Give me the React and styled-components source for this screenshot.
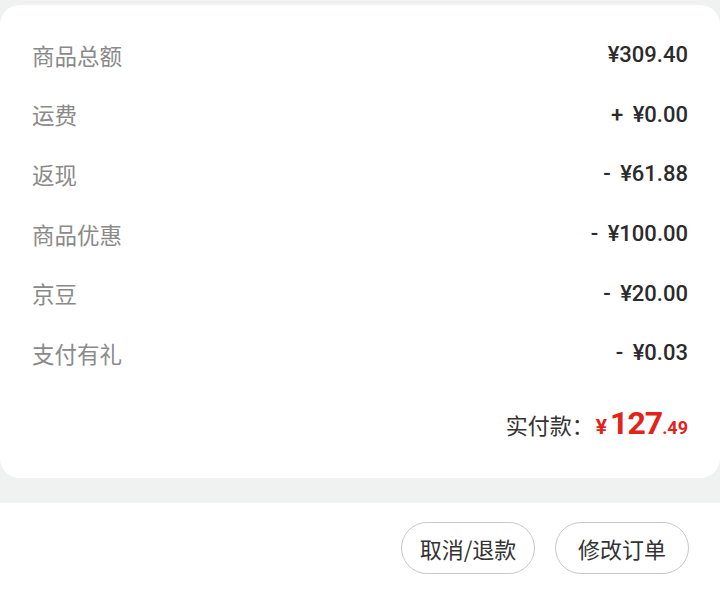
import React from 'react';
import styled, { createGlobalStyle } from 'styled-components';

const GlobalStyle = createGlobalStyle`
  html, body {
    margin: 0;
    padding: 0;
    background-color: #F0F2F1;
    font-family: Roboto, "Noto Sans CJK SC", sans-serif;
  }
`;

const Page = styled.div`
  width: 720px;
  height: 591px;
  padding-top: 5px;
  box-sizing: border-box;
  display: flex;
  flex-direction: column;
  background-color: #F0F2F1;
`;

const Card = styled.div`
  background-color: #FFFFFF;
  border-radius: 20px;
  padding: 20px 32px 23px 32px;
  height: 473px;
  box-sizing: border-box;
  display: flex;
  flex-direction: column;
`;

const Row = styled.div`
  height: 59.6px;
  display: flex;
  flex-direction: row;
  justify-content: space-between;
  align-items: center;
`;

const Label = styled.span`
  font-family: "Noto Sans CJK SC", sans-serif;
  font-size: 22.5px;
  color: #8A8A8A;
`;

const Amount = styled.span`
  font-family: Roboto, "Noto Sans CJK SC", sans-serif;
  font-size: 22px;
  font-weight: 500;
  color: #2B2B2B;
  word-spacing: 4px;
`;

const TotalRow = styled.div`
  margin-top: auto;
  height: 60px;
  display: flex;
  justify-content: flex-end;
  align-items: baseline;
  padding-top: 9px;
  box-sizing: border-box;
`;

const TotalLabel = styled.span`
  font-family: "Noto Sans CJK SC", sans-serif;
  font-size: 22px;
  color: #333333;
  margin-right: 2px;
`;

const Price = styled.span`
  font-family: Roboto, sans-serif;
  font-weight: 700;
  color: #E2231A;
  font-size: ${props => props.size}px;
  letter-spacing: ${props => props.tight ? '-1px' : '0'};
`;

const Footer = styled.div`
  margin-top: 25px;
  flex: 1;
  background-color: #FFFFFF;
  display: flex;
  justify-content: flex-end;
  align-items: center;
  gap: 20px;
  padding: 2px 31px 0 0;
`;

const Button = styled.button`
  width: 134px;
  height: 52px;
  border-radius: 26px;
  border: 1px solid #C8C8C8;
  background-color: #FFFFFF;
  font-family: "Noto Sans CJK SC", sans-serif;
  font-size: 22px;
  color: #333333;
  padding: 0;
`;

const fees = [
  { label: '商品总额', value: '¥309.40' },
  { label: '运费', value: '+ ¥0.00' },
  { label: '返现', value: '- ¥61.88' },
  { label: '商品优惠', value: '- ¥100.00' },
  { label: '京豆', value: '- ¥20.00' },
  { label: '支付有礼', value: '- ¥0.03' },
];

export default function App() {
  return (
    <Page>
      <GlobalStyle />
      <Card>
        {fees.map(fee => (
          <Row key={fee.label}>
            <Label>{fee.label}</Label>
            <Amount>{fee.value}</Amount>
          </Row>
        ))}
        <TotalRow>
          <TotalLabel>实付款：</TotalLabel>
          <Price size={21}>¥</Price>
          <Price size={32} tight style={{ marginLeft: 3 }}>127</Price>
          <Price size={18}>.49</Price>
        </TotalRow>
      </Card>
      <Footer>
        <Button>取消/退款</Button>
        <Button>修改订单</Button>
      </Footer>
    </Page>
  );
}
